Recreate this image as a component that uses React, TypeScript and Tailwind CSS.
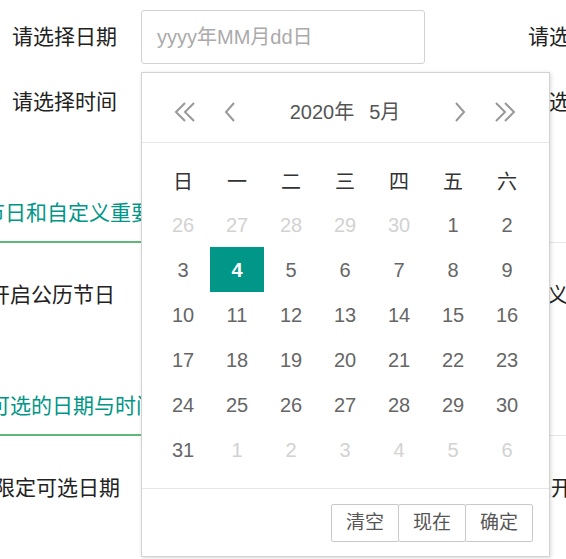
const font = '"Liberation Sans", "Noto Sans CJK SC", sans-serif';

interface ColumnProps {
    dateLabel: string;
    timeLabel: string;
    tab1?: string;
    row3: string;
    tab2?: string;
    row4: string;
    row4Offset: string;
}

function FormColumn({ dateLabel, timeLabel, tab1, row3, tab2, row4, row4Offset }: ColumnProps) {
    return (
        <div className="w-[516px] shrink-0 pt-[10px]">
            <div className="flex h-[54px] items-center">
                <div className="w-[141px] shrink-0 pl-[12px] text-[21px] text-[#222] whitespace-nowrap">{dateLabel}</div>
                <div className="flex h-[54px] w-[284px] items-center rounded-[3px] border border-[#d2d2d2] pl-[15px] text-[20px] text-[#aaa]">
                    yyyy年MM月dd日
                </div>
            </div>
            <div className="mt-[8px] flex h-[54px] items-center">
                <div className="w-[141px] shrink-0 pt-[5px] pl-[12px] text-[21px] text-[#222] whitespace-nowrap">{timeLabel}</div>
                <div className="h-[54px] w-[284px] rounded-[3px] border border-[#d2d2d2]" />
            </div>
            <div className="mt-[59px] flex h-[58px] border-b border-[#e6e6e6]">
                {tab1 && (
                    <div className="-mb-px -ml-[16px] flex w-[200px] items-center border-b-2 border-[#5FB878] text-[21px] text-[#009688] whitespace-nowrap">
                        {tab1}
                    </div>
                )}
            </div>
            <div className="mt-[25px] flex h-[54px] items-center">
                <div className="-ml-[11px] text-[21px] text-[#222] whitespace-nowrap">{row3}</div>
            </div>
            <div className="mt-[56px] flex h-[58px] border-b border-[#e6e6e6]">
                {tab2 && (
                    <div className="-mb-px -ml-[11px] flex w-[200px] items-center border-b-2 border-[#5FB878] text-[21px] text-[#009688] whitespace-nowrap">
                        {tab2}
                    </div>
                )}
            </div>
            <div className="mt-[25px] flex h-[54px] items-center">
                <div className={`${row4Offset} text-[21px] text-[#222] whitespace-nowrap`}>{row4}</div>
            </div>
        </div>
    );
}

function Chevron({ dir, double }: { dir: 'left' | 'right'; double?: boolean }) {
    const w = double ? 24 : 14;
    const paths = double
        ? dir === 'left'
            ? ['M12 1 L3 10 L12 19', 'M21 1 L12 10 L21 19']
            : ['M3 1 L12 10 L3 19', 'M12 1 L21 10 L12 19']
        : dir === 'left'
            ? ['M11 1 L3 10 L11 19']
            : ['M3 1 L11 10 L3 19'];
    return (
        <svg width={w} height={20} viewBox={`0 0 ${w} 20`} fill="none" stroke="#999" strokeWidth={2} className="shrink-0">
            {paths.map((d) => (
                <path key={d} d={d} />
            ))}
        </svg>
    );
}

const weekdays = ['日', '一', '二', '三', '四', '五', '六'];

const days: { n: number; cur: boolean }[] = [
    ...[26, 27, 28, 29, 30].map((n) => ({ n, cur: false })),
    ...Array.from({ length: 31 }, (_, i) => ({ n: i + 1, cur: true })),
    ...[1, 2, 3, 4, 5, 6].map((n) => ({ n, cur: false })),
];

function DatePicker() {
    return (
        <div className="absolute left-[141px] top-[72px] w-[409px] border border-[#d2d2d2] bg-white shadow-[1px_1px_4px_rgba(0,0,0,0.15)]">
            <div className="flex h-[70px] items-center border-b border-[#e6e6e6] pt-[8px] pl-[31px] pr-[32px]">
                <Chevron dir="left" double />
                <div className="ml-[26px]">
                    <Chevron dir="left" />
                </div>
                <div className="flex flex-1 justify-center text-[20px] text-[#555]">
                    <span>2020年</span>
                    <span className="ml-[15px]">5月</span>
                </div>
                <Chevron dir="right" />
                <div className="ml-[26px]">
                    <Chevron dir="right" double />
                </div>
            </div>
            <div className="pt-[19px] pb-[16px] pl-[14px]">
                <div className="grid w-[378px] grid-cols-7">
                    {weekdays.map((w) => (
                        <div key={w} className="flex h-[40px] items-center justify-center text-[20px] text-[#333]">
                            {w}
                        </div>
                    ))}
                    {days.map((d, i) => (
                        <div
                            key={i}
                            className={
                                d.cur && d.n === 4
                                    ? 'flex h-[45px] items-center justify-center bg-[#009688] text-[20px] font-bold text-white'
                                    : d.cur
                                        ? 'flex h-[45px] items-center justify-center text-[20px] text-[#666]'
                                        : 'flex h-[45px] items-center justify-center text-[20px] text-[#d2d2d2]'
                            }
                        >
                            {d.n}
                        </div>
                    ))}
                </div>
            </div>
            <div className="flex justify-end border-t border-[#e6e6e6] pt-[15px] pr-[16px] pb-[14px]">
                {['清空', '现在', '确定'].map((b, i) => (
                    <div
                        key={b}
                        className={`flex h-[38px] w-[68px] items-center justify-center rounded-[2px] border border-[#c9c9c9] text-[19px] text-[#555] ${i > 0 ? '-ml-px' : ''}`}
                    >
                        {b}
                    </div>
                ))}
            </div>
        </div>
    );
}

export default function App() {
    return (
        <div className="relative h-[559px] w-[566px] overflow-hidden bg-white" style={{ fontFamily: font }}>
            <div className="flex">
                <FormColumn
                    dateLabel="请选择日期"
                    timeLabel="请选择时间"
                    tab1="节日和自定义重要日"
                    row3="开启公历节日"
                    tab2="可选的日期与时间"
                    row4="限定可选日期"
                    row4Offset="-ml-[6px]"
                />
                <FormColumn
                    dateLabel="请选择日期"
                    timeLabel="请选择时间"
                    row3="自定义重要日"
                    row4="限定开始日期"
                    row4Offset="-ml-[7px]"
                />
            </div>
            <DatePicker />
        </div>
    );
}
